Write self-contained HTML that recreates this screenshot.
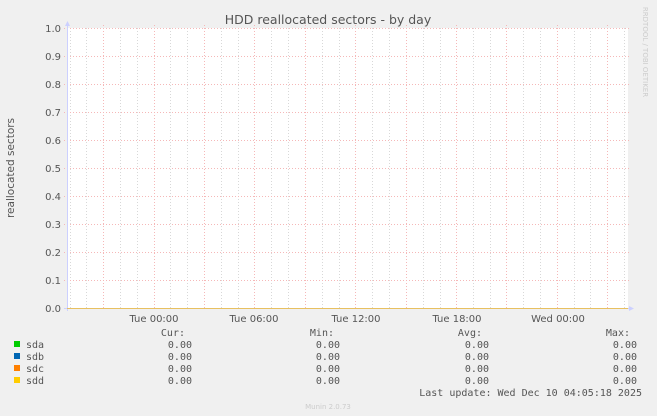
<!DOCTYPE html><html><head><style>body{margin:0;background:#f0f0f0}svg{display:block}</style></head><body>
<svg width="657" height="416" xmlns="http://www.w3.org/2000/svg" font-family="DejaVu Sans, Liberation Sans, sans-serif">
<rect width="657" height="416" fill="#f0f0f0"/>
<rect x="67" y="28" width="561" height="280" fill="#fff"/>
<g stroke="#d8d8d8" stroke-dasharray="1,2" stroke-width="1">
<path d="M86.5 28V308M120.5 28V308M137.5 28V308M170.5 28V308M187.5 28V308M221.5 28V308M238.5 28V308M271.5 28V308M288.5 28V308M322.5 28V308M339.5 28V308M372.5 28V308M389.5 28V308M423.5 28V308M440.5 28V308M473.5 28V308M490.5 28V308M523.5 28V308M540.5 28V308M574.5 28V308M590.5 28V308M624.5 28V308M70.5 28V308"/>
</g>
<g stroke="#f5b8b8" stroke-dasharray="1,2" stroke-width="1">
<path d="M103.5 25V308M154.5 25V308M204.5 25V308M254.5 25V308M305.5 25V308M355.5 25V308M406.5 25V308M456.5 25V308M506.5 25V308M557.5 25V308M607.5 25V308"/>
<path d="M64 28.5H630M64 56.5H630M64 84.5H630M64 112.5H630M64 140.5H630M64 168.5H630M64 196.5H630M64 224.5H630M64 252.5H630M64 280.5H630"/>
</g>
<path d="M67.5 24V311M64 308.5H632" stroke="#ccd0ff" stroke-width="1"/>
<path d="M65 26L67.5 21L70 26Z M629 306L634 308.5L629 311Z" fill="#ccd0ff"/>
<path d="M67 308.5H628" stroke="#e8c060" stroke-width="1"/>
<text x="328" y="24" font-size="12.5" fill="#555" text-anchor="middle">HDD reallocated sectors - by day</text>
<g font-size="10" fill="#555" text-anchor="end">
<text x="61" y="32">1.0</text><text x="61" y="60">0.9</text><text x="61" y="88">0.8</text><text x="61" y="116">0.7</text><text x="61" y="144">0.6</text><text x="61" y="172">0.5</text><text x="61" y="200">0.4</text><text x="61" y="228">0.3</text><text x="61" y="256">0.2</text><text x="61" y="284">0.1</text><text x="61" y="312">0.0</text>
</g>
<g font-size="10" fill="#555" text-anchor="middle">
<text x="154" y="322">Tue 00:00</text><text x="254" y="322">Tue 06:00</text><text x="356" y="322">Tue 12:00</text><text x="457" y="322">Tue 18:00</text><text x="558" y="322">Wed 00:00</text>
</g>
<text transform="translate(14,168) rotate(-90)" font-size="10.5" fill="#555" text-anchor="middle">reallocated sectors</text>
<text transform="translate(643,52) rotate(90)" font-size="7" fill="#ccc" text-anchor="middle">RRDTOOL / TOBI OETIKER</text>
<g font-family="DejaVu Sans Mono, Liberation Mono, monospace" font-size="10" fill="#555">
<text x="185" y="336" text-anchor="end">Cur:</text><text x="334" y="336" text-anchor="end">Min:</text><text x="482" y="336" text-anchor="end">Avg:</text><text x="630" y="336" text-anchor="end">Max:</text>
<text x="26" y="348">sda</text><text x="26" y="360">sdb</text><text x="26" y="372">sdc</text><text x="26" y="384">sdd</text>
<g text-anchor="end">
<text x="192" y="348">0.00</text><text x="192" y="360">0.00</text><text x="192" y="372">0.00</text><text x="192" y="384">0.00</text>
<text x="340" y="348">0.00</text><text x="340" y="360">0.00</text><text x="340" y="372">0.00</text><text x="340" y="384">0.00</text>
<text x="489" y="348">0.00</text><text x="489" y="360">0.00</text><text x="489" y="372">0.00</text><text x="489" y="384">0.00</text>
<text x="637" y="348">0.00</text><text x="637" y="360">0.00</text><text x="637" y="372">0.00</text><text x="637" y="384">0.00</text>
<text x="642" y="396">Last update: Wed Dec 10 04:05:18 2025</text>
</g>
</g>
<rect x="14" y="341" width="6" height="6" fill="#00cc00"/>
<rect x="14" y="353" width="6" height="6" fill="#0066b3"/>
<rect x="14" y="365" width="6" height="6" fill="#ff8000"/>
<rect x="14" y="377" width="6" height="6" fill="#ffcc00"/>
<text x="328" y="409" font-size="7" fill="#ccc" text-anchor="middle">Munin 2.0.73</text>
</svg>
</body></html>
